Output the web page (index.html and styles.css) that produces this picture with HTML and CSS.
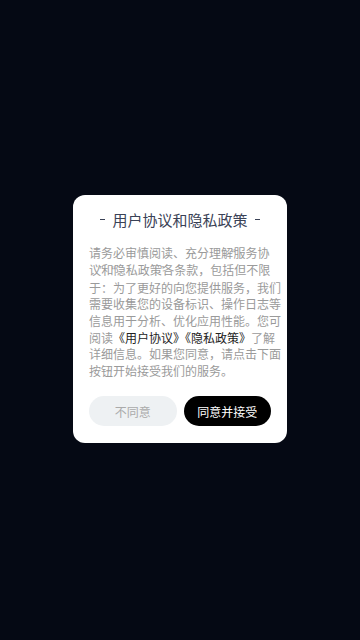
FILE: index.html
```html
<!DOCTYPE html>
<html lang="zh-CN">
<head>
  <meta charset="UTF-8">
  <title>用户协议和隐私政策</title>
  <link rel="stylesheet" href="styles.css">
</head>
<body>

  <div class="overlay">
    <div class="dialog">
      <h3 class="dialog-title">用户协议和隐私政策</h3>
      <p class="dialog-text">请务必审慎阅读、充分理解<span class="q">“</span>服务协<br>议<span class="q">”</span>和<span class="q">“</span>隐私政策<span class="q">”</span>各条款，包括但不限<br>于：为了更好的向您提供服务，我们<br>需要收集您的设备标识、操作日志等<br>信息用于分析、优化应用性能。您可<br>阅读<a class="link">《用户协议》</a><a class="link">《隐私政策》</a>了解<br>详细信息。如果您同意，请点击下面<br>按钮开始接受我们的服务。</p>
      <div class="dialog-buttons">
        <button class="btn btn-cancel">不同意</button>
        <button class="btn btn-ok">同意并接受</button>
      </div>
    </div>
  </div>

</body>
</html>
```

FILE: styles.css
```css
body {
  margin: 0;
  font-family: "Noto Sans CJK SC", "Noto Sans", sans-serif;
  background-color: #050914;
}

.overlay {
  width: 360px;
  height: 640px;
  display: flex;
  align-items: center;
  justify-content: center;
}

.dialog {
  width: 214px;
  box-sizing: border-box;
  margin-top: -2px;
  padding: 13px 16px 17px;
  background-color: #fff;
  border-radius: 12px;
}

.dialog-title {
  margin: 0;
  display: flex;
  align-items: center;
  justify-content: center;
  gap: 7px;
  font-size: 15px;
  font-weight: normal;
  line-height: 24px;
  color: #3a4256;
}

.dialog-title::before,
.dialog-title::after {
  content: "";
  width: 5px;
  height: 1.5px;
  background-color: #3a4256;
}

.dialog-text {
  margin: 13px 0 0;
  font-size: 12px;
  line-height: 16.6px;
  color: #9a9a9a;
  white-space: nowrap;
}

/* narrow quotes like the original */
.q {
  font-family: "Liberation Sans", sans-serif;
  margin: 0 -1.8px;
}

.link {
  color: #222;
}

.dialog-buttons {
  display: flex;
  gap: 7px;
  margin-top: 17px;
}

.btn {
  flex: 1;
  height: 30px;
  border: none;
  border-radius: 15px;
  font-family: inherit;
  font-size: 12px;
  cursor: pointer;
}

.btn-cancel {
  background-color: #eef1f3;
  color: #aaa;
}

.btn-ok {
  background-color: #000;
  color: #fff;
}
```
